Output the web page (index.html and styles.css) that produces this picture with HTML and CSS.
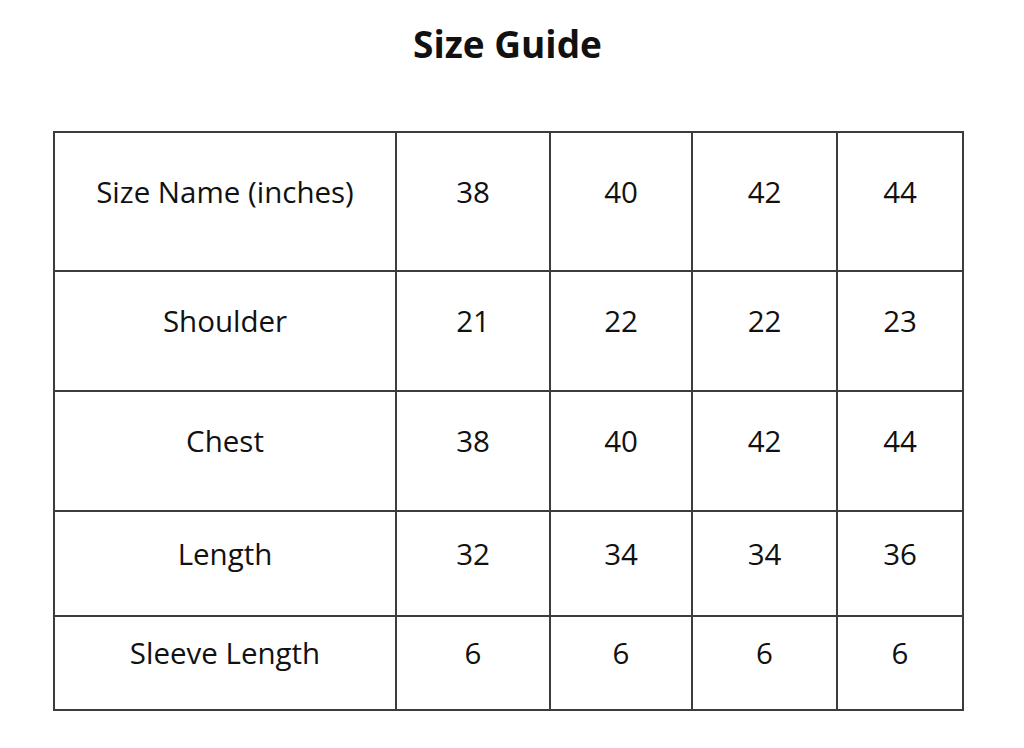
FILE: index.html
```html
<!DOCTYPE html>
<html>
<head>
<meta charset="utf-8">
<link rel="stylesheet" href="styles.css">
</head>
<body>
<div class="page">
  <h1 class="title">Size Guide</h1>
  <table class="guide">
    <colgroup>
      <col class="c-label"><col class="c1"><col class="c2"><col class="c3"><col class="c4">
    </colgroup>
    <tr class="r1"><td>Size Name (inches)</td><td>38</td><td>40</td><td>42</td><td>44</td></tr>
    <tr class="r2"><td>Shoulder</td><td>21</td><td>22</td><td>22</td><td>23</td></tr>
    <tr class="r3"><td>Chest</td><td>38</td><td>40</td><td>42</td><td>44</td></tr>
    <tr class="r4"><td>Length</td><td>32</td><td>34</td><td>34</td><td>36</td></tr>
    <tr class="r5"><td>Sleeve Length</td><td>6</td><td>6</td><td>6</td><td>6</td></tr>
  </table>
</div>
</body>
</html>
```

FILE: styles.css
```css
html, body {
  margin: 0;
  padding: 0;
  background: #ffffff;
}
body {
  font-family: "Open Sans", "Liberation Sans", sans-serif;
  color: #111;
}
.page {
  width: 909px;
  margin-left: 53px;
  padding-top: 21px;
}
.title {
  margin: 0;
  text-align: center;
  font-size: 37px;
  font-weight: 700;
  line-height: 46px;
}
.guide {
  margin-top: 64px;
  width: 909px;
  table-layout: fixed;
  border-collapse: collapse;
}
.c-label { width: 342px; }
.c1 { width: 154px; }
.c2 { width: 142px; }
.c3 { width: 145px; }
.c4 { width: 126px; }
.guide td {
  border: 2px solid #3c3c3c;
  text-align: center;
  vertical-align: middle;
  font-size: 29.5px;
  line-height: 38px;
  padding: 0 0 20px 0;
}
.r1 { height: 139px; }
.r2 { height: 120px; }
.r3 { height: 120px; }
.r4 { height: 105px; }
.r5 { height: 94px; }
```
